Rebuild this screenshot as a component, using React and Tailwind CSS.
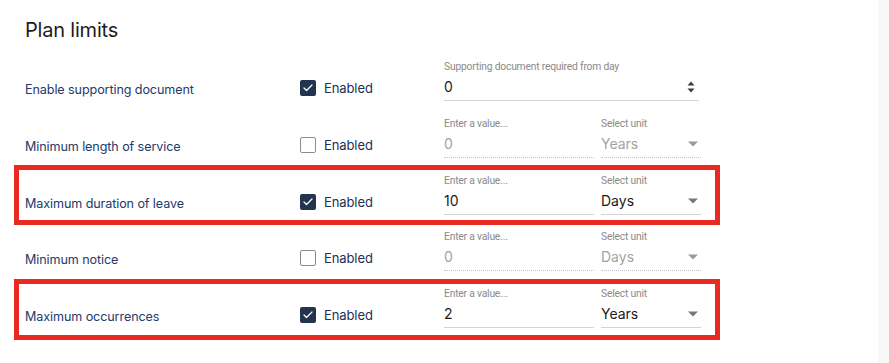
import { Check } from "lucide-react";

const rows = [
  { label: "Enable supporting document", enabled: true, kind: "number", fieldLabel: "Supporting document required from day", value: "0" },
  { label: "Minimum length of service", enabled: false, kind: "unit", value: "0", unit: "Years" },
  { label: "Maximum duration of leave", enabled: true, kind: "unit", value: "10", unit: "Days", marked: true, box: "top-[-9px] h-[60px]" },
  { label: "Minimum notice", enabled: false, kind: "unit", value: "0", unit: "Days" },
  { label: "Maximum occurrences", enabled: true, kind: "unit", value: "2", unit: "Years", marked: true, box: "top-[-8px] h-[61px]" },
];

function Field({ label, value, enabled, width, right }) {
  return (
    <div className={`flex flex-col ${width}`}>
      <span className="font-['Roboto'] text-[10.3px] leading-[14px] text-[#8a8a8a] tracking-[-0.2px]">{label}</span>
      <div
        className={`mt-[3px] flex items-center justify-between pb-[3px] border-b ${
          enabled ? "border-solid border-[#d4d4d4]" : "border-dotted border-[#c4c4c4]"
        }`}
      >
        <span className={`text-[14px] leading-[20px] ${enabled ? "text-[#1b1b1b]" : "text-[#a3a3a3]"}`}>{value}</span>
        {right}
      </div>
    </div>
  );
}

function Caret({ enabled }) {
  return (
    <svg width="10" height="6" viewBox="0 0 10 6" className="mr-[3px]">
      <path d="M0 0.5h10L5 5.5z" fill={enabled ? "#777" : "#9a9a9a"} />
    </svg>
  );
}

function Spinner() {
  return (
    <svg width="8" height="12" viewBox="0 0 8 12" className="mr-[4px]">
      <path d="M4 0.5L7.5 4.5H0.5z M4 11.5L7.5 7.5H0.5z" fill="#3d3d3d" />
    </svg>
  );
}

function Row({ row }) {
  return (
    <div className="relative flex items-start h-[56.75px] px-[25px]">
      {row.marked && (
        <span className={`absolute left-[14px] w-[706px] border-[5px] border-[#ea2a22] ${row.box}`} />
      )}
      <div className="w-[275px] pt-[20px] text-[12.6px] leading-[20px] text-[#223a6c] tracking-[-0.1px]">
        {row.label}
      </div>
      <div className="w-[144px] pt-[18px] flex items-center h-[38px] gap-[8px]">
        {row.enabled ? (
          <span className="w-[16px] h-[16px] rounded-[2px] bg-[#233451] flex items-center justify-center">
            <Check size={12} strokeWidth={2.5} className="text-white" />
          </span>
        ) : (
          <span className="w-[16px] h-[16px] rounded-[2px] border-[1.5px] border-[#8c8c8c] bg-white" />
        )}
        <span className="text-[13px] leading-[20px] text-[#1f2f55] tracking-[-0.1px]">Enabled</span>
      </div>
      {row.kind === "number" ? (
        <Field label={row.fieldLabel} value={row.value} enabled width="w-[255px]" right={<Spinner />} />
      ) : (
        <div className="flex gap-[7px]">
          <Field label="Enter a value..." value={row.value} enabled={row.enabled} width="w-[150px]" />
          <Field
            label="Select unit"
            value={row.unit}
            enabled={row.enabled}
            width="w-[100px]"
            right={<Caret enabled={row.enabled} />}
          />
        </div>
      )}
    </div>
  );
}

export default function App() {
  return (
    <div className="flex w-[889px] h-[363px] bg-white overflow-hidden" style={{ fontFamily: "Inter, Roboto, sans-serif" }}>
      <div className="flex-1 flex flex-col">
        <h2 className="px-[25px] pt-[17px] text-[20px] leading-[26px] text-[#1d1d1d] tracking-[-0.2px]">Plan limits</h2>
        <div className="mt-[17px] flex flex-col">
          {rows.map((row) => (
            <Row key={row.label} row={row} />
          ))}
        </div>
      </div>
      <div className="w-[11px] bg-[#f8f8f8]" />
    </div>
  );
}
